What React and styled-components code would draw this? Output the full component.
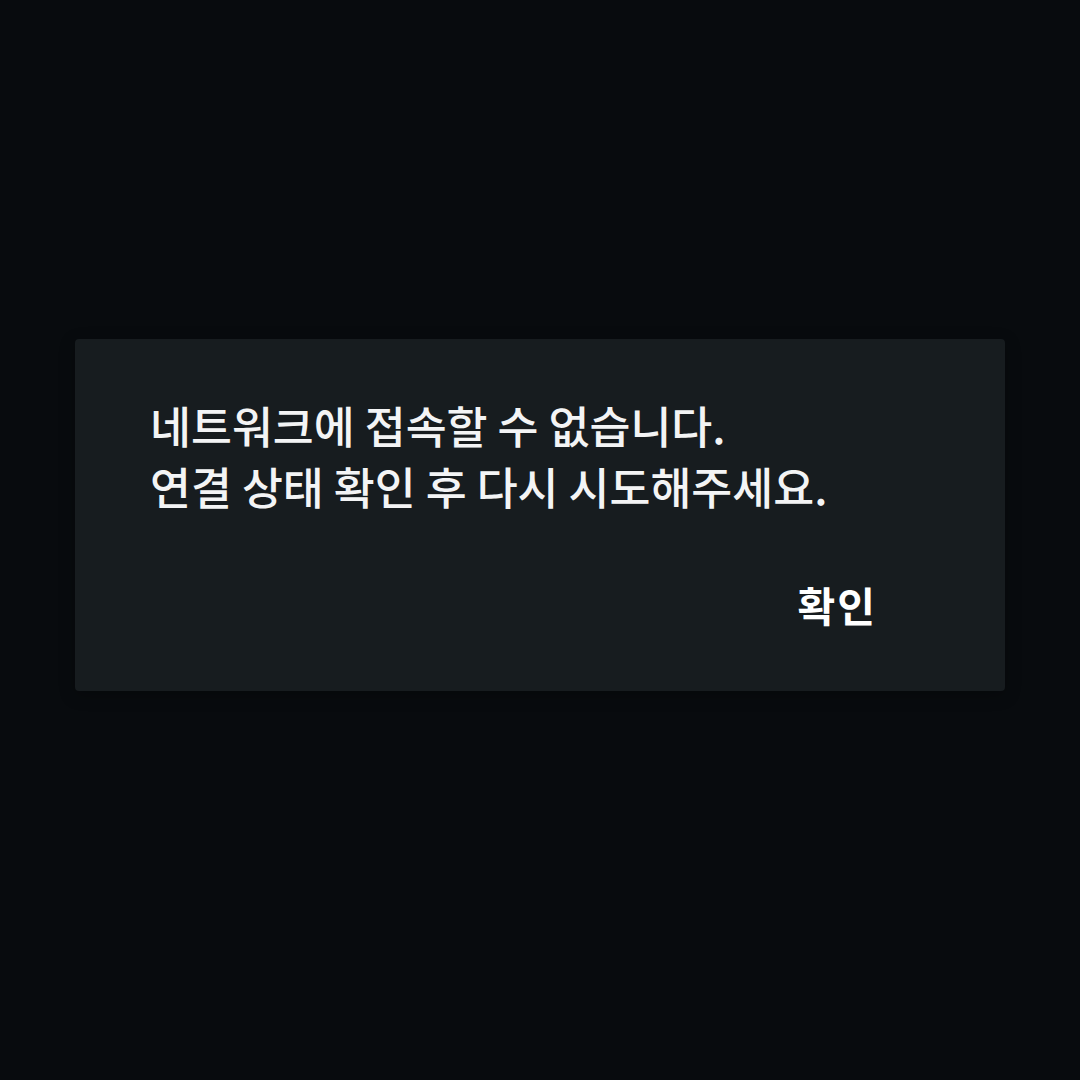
import React from "react";
import styled, { createGlobalStyle } from "styled-components";

const GlobalStyle = createGlobalStyle`
  html, body {
    margin: 0;
    padding: 0;
    background: #080b0e;
  }

  body {
    font-family: "Noto Sans CJK KR", "Noto Sans", sans-serif;
    color: #ffffff;
  }
`;

const Page = styled.div`
  min-height: 100vh;
  box-sizing: border-box;
  padding: 339px 75px 0;
`;

const Dialog = styled.div`
  background: #171c1f;
  border-radius: 4px;
  box-shadow: 0 4px 16px rgba(0, 0, 0, 0.25);
  padding: 55px 75px 50px;
  display: flex;
  flex-direction: column;
  gap: 52px;
`;

const Message = styled.p`
  margin: 0;
  font-size: 44.5px;
  line-height: 61px;
  font-weight: 500;
  color: #f3f4f5;
`;

const Actions = styled.div`
  display: flex;
  justify-content: flex-end;
  padding-right: 37px;
`;

const Button = styled.button`
  background: none;
  border: none;
  padding: 12px 16px;
  font-family: inherit;
  font-size: 41px;
  line-height: 49px;
  font-weight: 700;
  color: #ffffff;
  letter-spacing: 2px;
  cursor: pointer;
`;

const App = () => (
  <>
    <GlobalStyle />
    <Page>
      <Dialog role="alertdialog">
        <Message>
          네트워크에 접속할 수 없습니다.
          <br />
          연결 상태 확인 후 다시 시도해주세요.
        </Message>
        <Actions>
          <Button>확인</Button>
        </Actions>
      </Dialog>
    </Page>
  </>
);

export default App;
